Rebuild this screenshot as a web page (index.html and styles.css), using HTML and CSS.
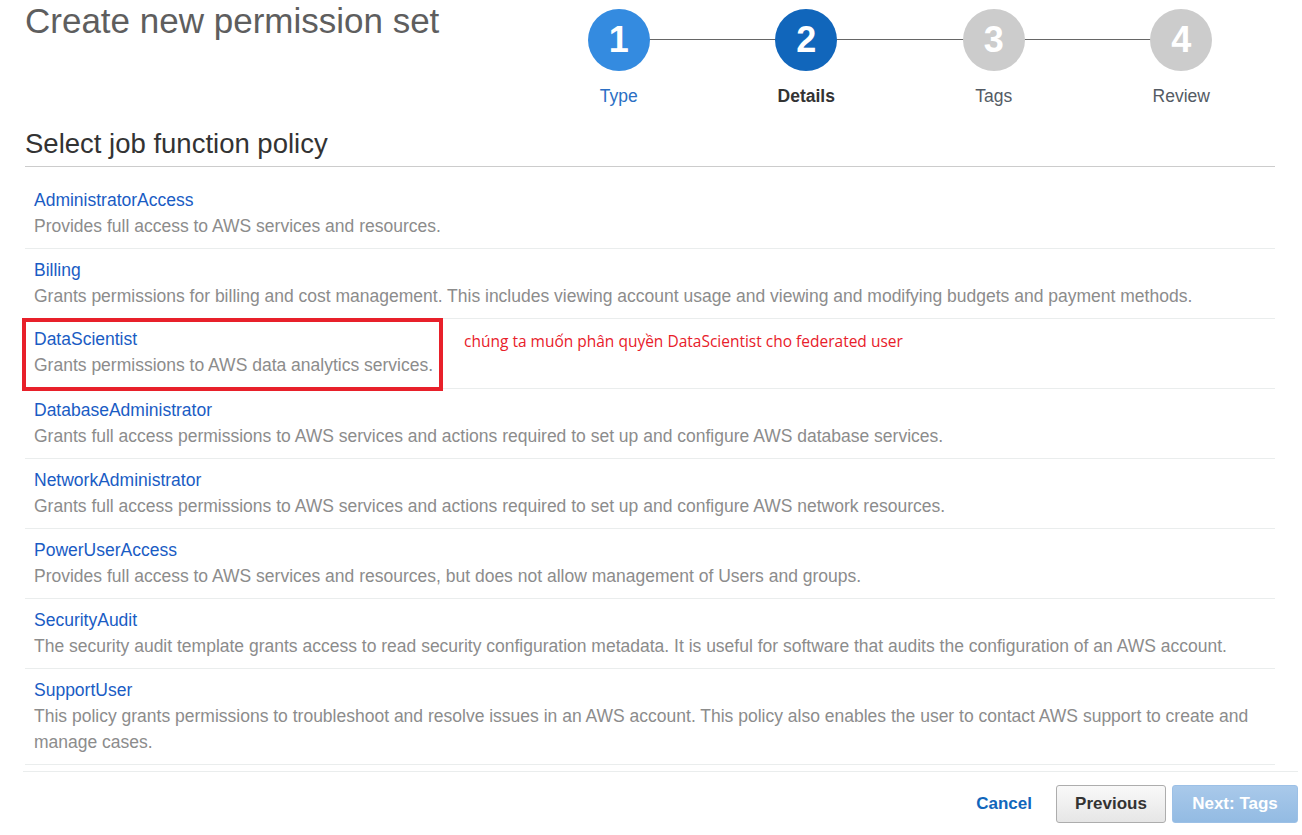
FILE: index.html
```html
<!DOCTYPE html>
<html lang="en">
<head>
<meta charset="utf-8">
<title>Create new permission set</title>
<link rel="stylesheet" href="styles.css">
</head>
<body>
<div class="page">
  <header class="header">
    <h1 class="title">Create new permission set</h1>
    <ol class="steps">
      <li class="step done"><span class="circle">1</span><span class="label">Type</span></li>
      <li class="step current"><span class="circle">2</span><span class="label">Details</span></li>
      <li class="step"><span class="circle">3</span><span class="label">Tags</span></li>
      <li class="step"><span class="circle">4</span><span class="label">Review</span></li>
    </ol>
  </header>

  <h2 class="section-title">Select job function policy</h2>

  <ul class="policies">
    <li class="policy">
      <a class="name" href="#">AdministratorAccess</a>
      <p class="desc">Provides full access to AWS services and resources.</p>
    </li>
    <li class="policy">
      <a class="name" href="#">Billing</a>
      <p class="desc">Grants permissions for billing and cost management. This includes viewing account usage and viewing and modifying budgets and payment methods.</p>
    </li>
    <li class="policy highlighted">
      <div class="hl-box">
        <a class="name" href="#">DataScientist</a>
        <p class="desc">Grants permissions to AWS data analytics services.</p>
      </div>
      <span class="note">chúng ta muốn phân quyền DataScientist cho federated user</span>
    </li>
    <li class="policy">
      <a class="name" href="#">DatabaseAdministrator</a>
      <p class="desc">Grants full access permissions to AWS services and actions required to set up and configure AWS database services.</p>
    </li>
    <li class="policy">
      <a class="name" href="#">NetworkAdministrator</a>
      <p class="desc">Grants full access permissions to AWS services and actions required to set up and configure AWS network resources.</p>
    </li>
    <li class="policy">
      <a class="name" href="#">PowerUserAccess</a>
      <p class="desc">Provides full access to AWS services and resources, but does not allow management of Users and groups.</p>
    </li>
    <li class="policy">
      <a class="name" href="#">SecurityAudit</a>
      <p class="desc">The security audit template grants access to read security configuration metadata. It is useful for software that audits the configuration of an AWS account.</p>
    </li>
    <li class="policy">
      <a class="name" href="#">SupportUser</a>
      <p class="desc">This policy grants permissions to troubleshoot and resolve issues in an AWS account. This policy also enables the user to contact AWS support to create and manage cases.</p>
    </li>
  </ul>
</div>

<footer class="footer">
  <a class="cancel" href="#">Cancel</a>
  <button class="btn btn-secondary" type="button">Previous</button>
  <button class="btn btn-primary" type="button" disabled>Next: Tags</button>
</footer>
</body>
</html>
```

FILE: styles.css
```css
* { box-sizing: border-box; }

html, body {
  margin: 0;
  padding: 0;
  background: #ffffff;
}

body {
  font-family: "Liberation Sans", Arial, sans-serif;
  font-size: 17.5px;
  color: #444444;
  overflow: hidden;
}

.page {
  width: 1250px;
  margin-left: 25px;
}

.header {
  display: flex;
  justify-content: space-between;
  align-items: flex-start;
  height: 109px;
}

.title {
  margin: 1px 0 0 0;
  font-size: 35px;
  line-height: 40px;
  font-weight: normal;
  color: #5e5e5e;
}

.steps {
  list-style: none;
  margin: 0;
  padding: 0;
  width: 750px;
  display: flex;
}

.step {
  flex: 1;
  display: flex;
  flex-direction: column;
  align-items: center;
  position: relative;
  padding-top: 9px;
}

.step + .step::before {
  content: "";
  position: absolute;
  top: 39px;
  left: -50%;
  right: 50%;
  height: 1px;
  background: #666666;
  z-index: 0;
}

.circle {
  position: relative;
  z-index: 1;
  width: 62px;
  height: 62px;
  border-radius: 50%;
  background: #cccccc;
  color: #ffffff;
  font-weight: bold;
  font-size: 36px;
  line-height: 62px;
  text-align: center;
}

.step.done .circle { background: #348be0; }
.step.current .circle { background: #1166bb; }

.label {
  margin-top: 12px;
  line-height: 26px;
  font-size: 17.5px;
  color: #545b64;
}

.step.done .label { color: #2b6fc4; }
.step.current .label { color: #333333; font-weight: bold; }

.section-title {
  margin: 19px 0 0 0;
  padding-bottom: 6px;
  font-size: 27.5px;
  line-height: 32px;
  font-weight: normal;
  color: #333333;
  border-bottom: 1px solid #cccccc;
}

.policies {
  list-style: none;
  margin: 12px 0 0 0;
  padding: 0;
}

.policy {
  padding: 8px 9px 9px 9px;
  border-bottom: 1px solid #eaeded;
}

.name {
  display: block;
  line-height: 26px;
  color: #1a5cc4;
  text-decoration: none;
}

.desc {
  margin: 0;
  line-height: 26px;
  color: #8c8c8c;
}

.policy.highlighted {
  display: flex;
  align-items: flex-start;
}

.hl-box {
  flex: none;
  margin: -9px 0 -12px -12px;
  padding: 4px 8px 9px 8px;
  width: 421px;
  height: 73px;
  border: 4px solid #e8202a;
  white-space: nowrap;
}

.note {
  margin-left: 21px;
  margin-top: 1px;
  line-height: 26px;
  font-family: "Open Sans", "Noto Sans", sans-serif;
  font-size: 15.5px;
  color: #e8202a;
  white-space: nowrap;
}

.footer {
  margin: 6px 0 0 23px;
  width: 1275px;
  border-top: 1px solid #eaeded;
  padding-top: 13px;
  display: flex;
  justify-content: flex-end;
  align-items: center;
}

.cancel {
  font-weight: bold;
  font-size: 17px;
  color: #1166bb;
  text-decoration: none;
  margin-right: 24px;
}

.btn {
  font-family: "Liberation Sans", Arial, sans-serif;
  font-weight: bold;
  font-size: 17px;
  height: 38px;
  border-radius: 3px;
  padding: 0;
}

.btn-secondary {
  width: 110px;
  color: #333333;
  border: 1px solid #adadad;
  background: linear-gradient(#f9f9f9, #e6e6e6);
}

.btn-primary {
  width: 126px;
  margin-left: 6px;
  color: #ffffff;
  border: 1px solid #9cc0e6;
  background: linear-gradient(#a9c9ea, #93bbe3);
}
```
